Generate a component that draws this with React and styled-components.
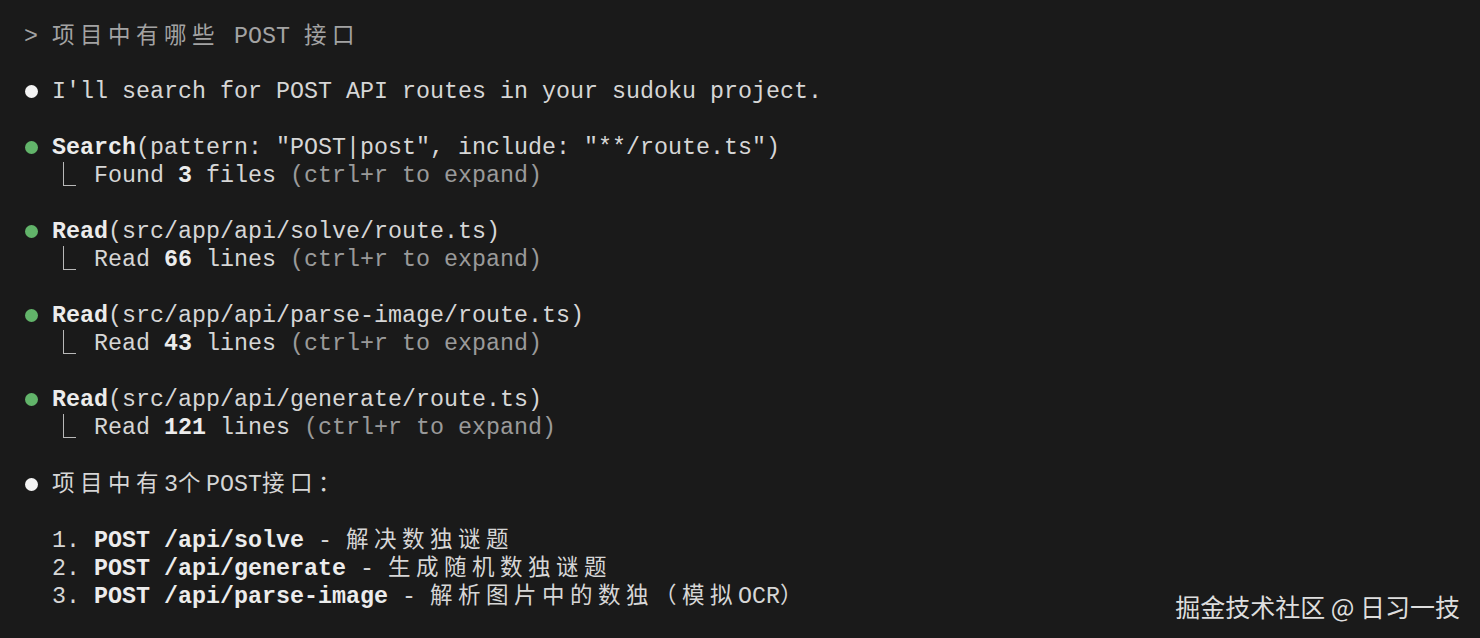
import styled, { createGlobalStyle } from 'styled-components';

const GlobalStyle = createGlobalStyle`
  html, body {
    margin: 0;
    background: #1a1a1a;
  }
`;

const Screen = styled.div`
  position: relative;
  min-height: 638px;
  box-sizing: border-box;
  padding: 22px 24px 20px;
  background: #1a1a1a;
  color: #d6d6d6;
  font-family: "Liberation Mono", "DejaVu Sans Mono", monospace;
  font-size: 23.333px;
`;

const Line = styled.div`
  height: 28px;
  line-height: 28px;
  white-space: pre;
  color: ${(p) => (p.$muted ? '#a3a3a3' : 'inherit')};
`;

const Gap = styled.div`
  height: 28px;
`;

const Cjk = styled.span`
  font-family: "Noto Sans CJK SC", sans-serif;
  font-size: 22.5px;
  letter-spacing: 5.5px;
  line-height: 1;
`;

const Strong = styled.b`
  font-weight: 700;
  color: #ececec;
`;

const Hint = styled.span`
  color: #9a9a9a;
`;

const Dot = styled.span`
  display: inline-block;
  width: 13px;
  height: 13px;
  margin: 0 14px 0 1px;
  border-radius: 50%;
  background: ${(p) => (p.$green ? '#62b46a' : '#f4f4f4')};
`;

const Corner = styled.span`
  display: inline-block;
  box-sizing: border-box;
  width: 13px;
  height: 24px;
  margin: 0 18px 0 11px;
  vertical-align: -4px;
  border-left: 1.5px solid #b8b8b8;
  border-bottom: 1.5px solid #b8b8b8;
`;

const Watermark = styled.div`
  position: absolute;
  right: 20px;
  bottom: 16px;
  font-family: "Noto Sans CJK SC", sans-serif;
  font-size: 25px;
  line-height: 32px;
  color: #dedede;
`;

const Result = ({ label, count }) => (
  <Line>
    {'  '}
    <Corner />
    {label} <Strong>{count}</Strong> {count === 3 ? 'files' : 'lines'} <Hint>(ctrl+r to expand)</Hint>
  </Line>
);

const ReadCall = ({ path, count }) => (
  <>
    <Line>
      <Dot $green />
      <Strong>Read</Strong>({path})
    </Line>
    <Result label="Read" count={count} />
    <Gap />
  </>
);

const routes = [
  { path: 'POST /api/solve', desc: '解决数独谜题' },
  { path: 'POST /api/generate', desc: '生成随机数独谜题' },
  { path: 'POST /api/parse-image', desc: '解析图片中的数独（模拟', tail: true },
];

const App = () => (
  <Screen>
    <GlobalStyle />
    <Line $muted>
      {'> '}
      <Cjk>项目中有哪些</Cjk> POST <Cjk>接口</Cjk>
    </Line>
    <Gap />
    <Line>
      <Dot />
      I'll search for POST API routes in your sudoku project.
    </Line>
    <Gap />
    <Line>
      <Dot $green />
      <Strong>Search</Strong>(pattern: "POST|post", include: "**/route.ts")
    </Line>
    <Result label="Found" count={3} />
    <Gap />
    <ReadCall path="src/app/api/solve/route.ts" count={66} />
    <ReadCall path="src/app/api/parse-image/route.ts" count={43} />
    <ReadCall path="src/app/api/generate/route.ts" count={121} />
    <Line>
      <Dot />
      <Cjk>项目中有</Cjk>3<Cjk>个</Cjk>POST<Cjk>接口：</Cjk>
    </Line>
    <Gap />
    {routes.map((r, i) => (
      <Line key={r.path}>
        {`  ${i + 1}. `}
        <Strong>{r.path}</Strong>
        {' - '}
        <Cjk>{r.desc}</Cjk>
        {r.tail && (
          <>
            OCR<Cjk>）</Cjk>
          </>
        )}
      </Line>
    ))}
    <Watermark>掘金技术社区 @ 日习一技</Watermark>
  </Screen>
);

export default App;
